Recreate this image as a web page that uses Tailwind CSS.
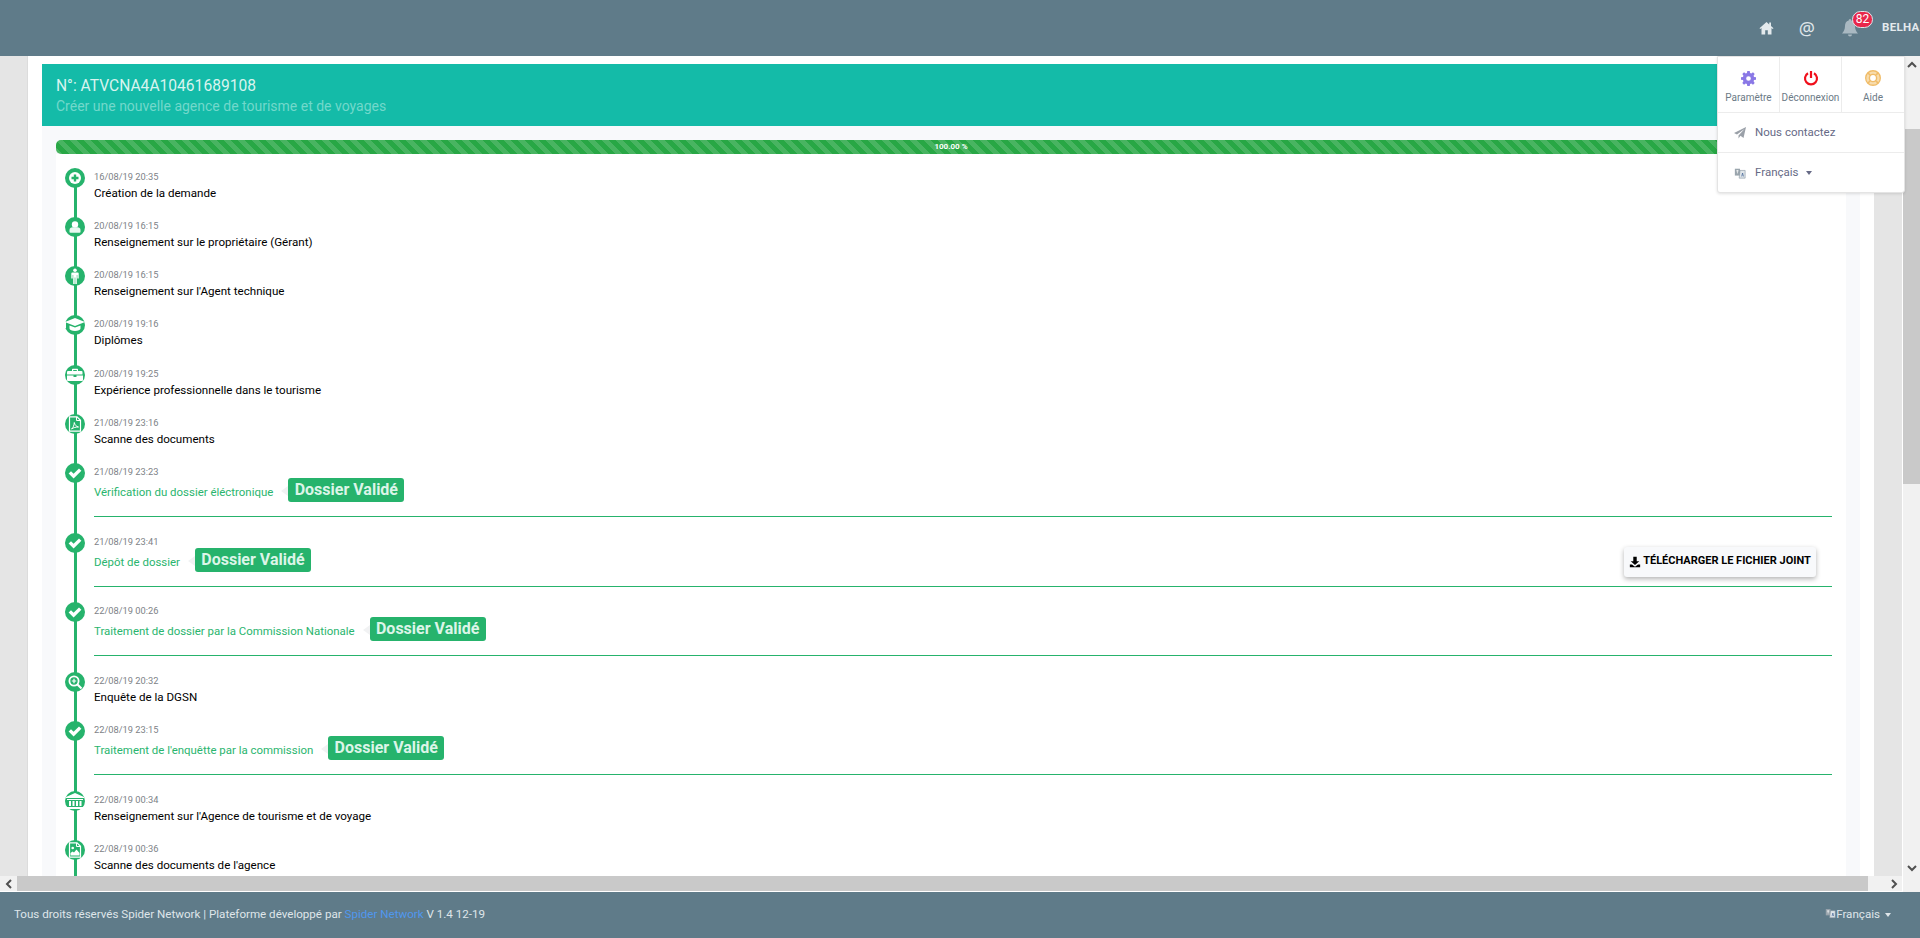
<!DOCTYPE html>
<html lang="fr">
<head>
<meta charset="utf-8">
<title>Suivi</title>
<script src="https://cdn.jsdelivr.net/npm/@tailwindcss/browser@4"></script>
</head>
<body class="m-0 overflow-hidden">
<svg class="hidden" width="0" height="0">
  <symbol id="check" viewBox="0 0 20 20"><path d="M3.600 10.600 6 8.200l2.600 2.600L14 5.400l2.400 2.400-7.800 7.800z" fill="currentColor"/></symbol>
  <symbol id="download" viewBox="0 0 14 14"><path d="M5 1h4v5h3L7 10.500 2 6h3zM1 10h2.500L7 12.500 10.500 10H13v3H1z" fill="currentColor"/></symbol>
  <symbol id="lang" viewBox="0 0 14 14"><path d="M1 2h6v8H1z" fill="#9aa5ad"/><path d="M7 4h6v9H6z" fill="#dfe5e9" stroke="#8794a0" stroke-width=".7"/><path d="M9 11l1-4 1 4" fill="none" stroke="#4a6a9a" stroke-width=".9"/><path d="M2.500 4.500h3M4 3.500v4" stroke="#fff" stroke-width=".8"/></symbol>
</svg>
<div class="flex flex-col h-[938px] w-[1920px] overflow-hidden font-['Roboto',sans-serif]">

  <header class="h-[56px] shrink-0 bg-[#5f7b89] flex items-center justify-end">
    <svg class="w-[15px] h-[14px] text-[#e4eaed] mr-[25px]" viewBox="0 0 15 14"><path d="M7.500 1 .5 7.300l.8.800L2.500 7v6.500h3.700V9.300h2.600v4.200h3.700V7l1.200 1.100.8-.8L12 5V1.500h-1.800v2z" fill="currentColor"/></svg>
    <span class="text-[18px] leading-none text-[#dfe6ea] mr-[27px] font-['Noto_Sans',sans-serif]">@</span>
    <div class="relative w-[16px] h-[18px] mr-[24px]">
      <svg class="w-[16px] h-[18px] text-[#a9b9c2]" viewBox="0 0 16 18"><path d="M8 0a1.400 1.400 0 0 1 1.300 1.500C12 2.200 13 4.500 13 7c0 3.500 1.200 5.500 3 7.500H0C1.800 12.500 3 10.500 3 7c0-2.500 1-4.800 3.700-5.500A1.400 1.400 0 0 1 8 0zM6 15.500h4a2 2 0 0 1-4 0z" fill="currentColor"/></svg>
      <span class="absolute left-[10px] -top-[8px] w-[21px] h-[17px] rounded-full bg-[#e8264b] border border-[#dfe6ea] text-white text-[12px] leading-[15px] text-center">82</span>
    </div>
    <span class="w-[38px] overflow-hidden whitespace-nowrap text-[11.500px] font-bold text-[#e4eaed] tracking-[.3px]">BELHA</span>
  </header>

  <div class="flex-1 flex min-h-0 relative">
    <div class="flex-1 min-w-0 flex flex-col">
      <main class="flex-1 min-h-0 flex overflow-hidden">
        <div class="w-[28px] shrink-0 bg-[#e5e5e5] border-r border-[#dcdcdc]"></div>
        <div class="flex-1 min-w-0 bg-white pt-[8px] pl-[14px] pr-[14px]">
          <section class="h-full flex flex-col">
            <div class="h-[62px] shrink-0 bg-[#14bba8] pl-[14px] pt-[2px] flex flex-col justify-center">
              <div class="text-[15.600px] leading-[20px] text-[#d9f4ef]">N°: ATVCNA4A10461689108</div>
              <div class="text-[14px] leading-[20px] text-[#72d8cb]">Créer une nouvelle agence de tourisme et de voyages</div>
            </div>
            <div class="flex-1 min-h-0 flex flex-col bg-[#f8f9fb] pt-[14px] px-[14px]">
              <div class="h-[14px] shrink-0 rounded-l-[5px] bg-[#28a745] bg-[linear-gradient(45deg,rgba(255,255,255,.15)_25%,transparent_25%,transparent_50%,rgba(255,255,255,.15)_50%,rgba(255,255,255,.15)_75%,transparent_75%,transparent)] bg-[length:14px_14px] flex items-center justify-center text-white text-[8px] font-bold leading-none">100.00 %</div>
              <div class="flex-1 min-h-0 bg-white relative pt-[14px] overflow-hidden">
                <div class="absolute left-[18px] top-[24px] bottom-0 w-[3px] bg-[#26b36c]"></div>

                <div class="relative h-[49.170px] flex pl-[9px] gap-[9px]">
                  <span class="w-[20px] h-[20px] shrink-0 rounded-full bg-[#26b36c] flex items-center justify-center"><svg class="w-[20px] h-[20px]" viewBox="0 0 20 20"><circle cx="10" cy="10" r="6" fill="#fff"/><path d="M8.800 6.500h2.400v2.300h2.300v2.400h-2.300v2.300H8.800v-2.300H6.500V8.800h2.300z" fill="#26b36c"/></svg></span>
                  <div><div class="pt-px text-[9.300px] leading-[15px] h-[16px] text-[#7d8287]">16/08/19 20:35</div><div class="text-[11.600px] leading-[18px] text-black">Création de la demande</div></div>
                </div>
                <div class="relative h-[49.170px] flex pl-[9px] gap-[9px]">
                  <span class="w-[20px] h-[20px] shrink-0 rounded-full bg-[#26b36c]"><svg class="w-[20px] h-[20px]" viewBox="0 0 20 20"><circle cx="10" cy="7.500" r="3.200" fill="#fff"/><path d="M4.500 15v-2c0-1.800 1.500-2.800 3-2.800h5c1.500 0 3 1 3 2.800v2q0 .8-1 .8H5.500q-1 0-1-.8z" fill="#e8f8f0"/></svg></span>
                  <div><div class="pt-px text-[9.300px] leading-[15px] h-[16px] text-[#7d8287]">20/08/19 16:15</div><div class="text-[11.600px] leading-[18px] text-black">Renseignement sur le propriétaire (Gérant)</div></div>
                </div>
                <div class="relative h-[49.170px] flex pl-[9px] gap-[9px]">
                  <span class="w-[20px] h-[20px] shrink-0 rounded-full bg-[#26b36c]"><svg class="w-[20px] h-[20px]" viewBox="0 0 20 20"><circle cx="10" cy="4.300" r="1.800" fill="#fff"/><path d="M6.300 7.500q0-1 1-1h5.400q1 0 1 1v5h-1.400v-3.500h-.5V18h-1.500v-6.500h-.6V18H8.200V9h-.5v3.500H6.300z" fill="#fff"/></svg></span>
                  <div><div class="pt-px text-[9.300px] leading-[15px] h-[16px] text-[#7d8287]">20/08/19 16:15</div><div class="text-[11.600px] leading-[18px] text-black">Renseignement sur l'Agent technique</div></div>
                </div>
                <div class="relative h-[49.170px] flex pl-[9px] gap-[9px]">
                  <span class="w-[20px] h-[20px] shrink-0 rounded-full bg-[#26b36c]"><svg class="w-[20px] h-[20px]" viewBox="0 0 20 20"><path d="M10 3 20 7l-10 4L1 7.500V13H0V7z" fill="#fff"/><path d="M4.500 10.500 10 12.500l5.500-2v3c0 1.500-2.500 2.500-5.500 2.500s-5.500-1-5.500-2.500z" fill="#fff"/></svg></span>
                  <div><div class="pt-px text-[9.300px] leading-[15px] h-[16px] text-[#7d8287]">20/08/19 19:16</div><div class="text-[11.600px] leading-[18px] text-black">Diplômes</div></div>
                </div>
                <div class="relative h-[49.170px] flex pl-[9px] gap-[9px]">
                  <span class="w-[20px] h-[20px] shrink-0 rounded-full bg-[#26b36c]"><svg class="w-[20px] h-[20px]" viewBox="0 0 20 20"><path d="M7 6V4.500q0-.7.7-.7h4.600q.7 0 .7.700V6h3.500q1 0 1 1v2.500H2V7q0-1 1-1zm1.200 0h3.600V5H8.200zM2 10.500h6.500V12h3v-1.500H18V15q0 1-1 1H3q-1 0-1-1z" fill="#fff"/></svg></span>
                  <div><div class="pt-px text-[9.300px] leading-[15px] h-[16px] text-[#7d8287]">20/08/19 19:25</div><div class="text-[11.600px] leading-[18px] text-black">Expérience professionnelle dans le tourisme</div></div>
                </div>
                <div class="relative h-[49.170px] flex pl-[9px] gap-[9px]">
                  <span class="w-[20px] h-[20px] shrink-0 rounded-full bg-[#26b36c]"><svg class="w-[20px] h-[20px]" viewBox="0 0 20 20"><path d="M4.500 2.800h7.500l3.500 3.500v10.900h-11z" fill="none" stroke="#fff" stroke-width="1.200"/><path d="M11.500 3v3.500H15" fill="none" stroke="#fff"/><path d="M6.500 15c2-1.500 2.500-4 2.800-6.500.5 2.500 2 4 4.200 4.500-2.500 0-5 .5-7 2z" fill="none" stroke="#fff" stroke-width="1"/></svg></span>
                  <div><div class="pt-px text-[9.300px] leading-[15px] h-[16px] text-[#7d8287]">21/08/19 23:16</div><div class="text-[11.600px] leading-[18px] text-black">Scanne des documents</div></div>
                </div>

                <div class="relative h-[69.670px] flex pl-[9px] gap-[9px]">
                  <span class="w-[20px] h-[20px] shrink-0 rounded-full bg-[#26b36c] text-white"><svg class="w-[20px] h-[20px]"><use href="#check"/></svg></span>
                  <div class="flex-1 mr-[14px]"><div class="pt-px text-[9.300px] leading-[15px] h-[16px] text-[#7d8287]">21/08/19 23:23</div>
                    <div class="flex items-center h-[24px] -mt-[1px]"><span class="text-[11.450px] leading-[18px] text-[#2ab56e] relative top-[2px]">Vérification du dossier éléctronique</span><span class="relative ml-[15px] w-[116px] h-[24px] rounded-[3px] bg-[#26b36c] text-[#dcf5e8] text-[16px] font-bold leading-[24px] text-center">Dossier Validé<i class="absolute -left-[7px] top-[8px] w-0 h-0 border-y-[5px] border-y-transparent border-r-[7px] border-r-[#f1f2f3]"></i></span></div>
                    <div class="h-px bg-[#26b36c] mt-[14px]"></div></div>
                </div>
                <div class="relative h-[69.670px] flex pl-[9px] gap-[9px]">
                  <span class="w-[20px] h-[20px] shrink-0 rounded-full bg-[#26b36c] text-white"><svg class="w-[20px] h-[20px]"><use href="#check"/></svg></span>
                  <div class="flex-1 mr-[14px]"><div class="pt-px text-[9.300px] leading-[15px] h-[16px] text-[#7d8287]">21/08/19 23:41</div>
                    <div class="flex items-center h-[24px] -mt-[1px]"><span class="text-[11.450px] leading-[18px] text-[#2ab56e] relative top-[2px]">Dépôt de dossier</span><span class="relative ml-[15px] w-[116px] h-[24px] rounded-[3px] bg-[#26b36c] text-[#dcf5e8] text-[16px] font-bold leading-[24px] text-center">Dossier Validé<i class="absolute -left-[7px] top-[8px] w-0 h-0 border-y-[5px] border-y-transparent border-r-[7px] border-r-[#f1f2f3]"></i></span>
                      <span class="relative top-[2px] ml-auto mr-[16px] -my-[3px] h-[30px] w-[192px] rounded-[3px] bg-[#f8f9fb] shadow-[0_2px_5px_rgba(0,0,0,.3)] flex items-center justify-center gap-[2px] text-[11px] font-bold text-black whitespace-nowrap"><svg class="w-[12px] h-[12px]"><use href="#download"/></svg>TÉLÉCHARGER LE FICHIER JOINT</span></div>
                    <div class="h-px bg-[#26b36c] mt-[14px]"></div></div>
                </div>
                <div class="relative h-[69.670px] flex pl-[9px] gap-[9px]">
                  <span class="w-[20px] h-[20px] shrink-0 rounded-full bg-[#26b36c] text-white"><svg class="w-[20px] h-[20px]"><use href="#check"/></svg></span>
                  <div class="flex-1 mr-[14px]"><div class="pt-px text-[9.300px] leading-[15px] h-[16px] text-[#7d8287]">22/08/19 00:26</div>
                    <div class="flex items-center h-[24px] -mt-[1px]"><span class="text-[11.450px] leading-[18px] text-[#2ab56e] relative top-[2px]">Traitement de dossier par la Commission Nationale</span><span class="relative ml-[15px] w-[116px] h-[24px] rounded-[3px] bg-[#26b36c] text-[#dcf5e8] text-[16px] font-bold leading-[24px] text-center">Dossier Validé<i class="absolute -left-[7px] top-[8px] w-0 h-0 border-y-[5px] border-y-transparent border-r-[7px] border-r-[#f1f2f3]"></i></span></div>
                    <div class="h-px bg-[#26b36c] mt-[14px]"></div></div>
                </div>

                <div class="relative h-[49.170px] flex pl-[9px] gap-[9px]">
                  <span class="w-[20px] h-[20px] shrink-0 rounded-full bg-[#26b36c]"><svg class="w-[20px] h-[20px]" viewBox="0 0 20 20"><circle cx="9" cy="9" r="4.600" fill="none" stroke="#fff" stroke-width="1.800"/><path d="m12.500 12.500 4 4" stroke="#fff" stroke-width="2.200"/><path d="M8.400 6.800h1.200v1.600h1.600v1.200H9.600v1.600H8.400V9.600H6.800V8.400h1.600z" fill="#fff"/></svg></span>
                  <div><div class="pt-px text-[9.300px] leading-[15px] h-[16px] text-[#7d8287]">22/08/19 20:32</div><div class="text-[11.600px] leading-[18px] text-black">Enquête de la DGSN</div></div>
                </div>

                <div class="relative h-[69.670px] flex pl-[9px] gap-[9px]">
                  <span class="w-[20px] h-[20px] shrink-0 rounded-full bg-[#26b36c] text-white"><svg class="w-[20px] h-[20px]"><use href="#check"/></svg></span>
                  <div class="flex-1 mr-[14px]"><div class="pt-px text-[9.300px] leading-[15px] h-[16px] text-[#7d8287]">22/08/19 23:15</div>
                    <div class="flex items-center h-[24px] -mt-[1px]"><span class="text-[11.450px] leading-[18px] text-[#2ab56e] relative top-[2px]">Traitement de l'enquêtte par la commission</span><span class="relative ml-[15px] w-[116px] h-[24px] rounded-[3px] bg-[#26b36c] text-[#dcf5e8] text-[16px] font-bold leading-[24px] text-center">Dossier Validé<i class="absolute -left-[7px] top-[8px] w-0 h-0 border-y-[5px] border-y-transparent border-r-[7px] border-r-[#f1f2f3]"></i></span></div>
                    <div class="h-px bg-[#26b36c] mt-[14px]"></div></div>
                </div>

                <div class="relative h-[49.170px] flex pl-[9px] gap-[9px]">
                  <span class="w-[20px] h-[20px] shrink-0 rounded-full bg-[#26b36c]"><svg class="w-[20px] h-[20px]" viewBox="0 0 20 20"><path d="M10 2 19 6v1H1V6zM2 8h16v1H2zM4 10h2v5H4zM7.500 10h2v5h-2zM11 10h2v5h-2zM14.500 10h2v5h-2zM2 16h16v2H2z" fill="#fff"/></svg></span>
                  <div><div class="pt-px text-[9.300px] leading-[15px] h-[16px] text-[#7d8287]">22/08/19 00:34</div><div class="text-[11.600px] leading-[18px] text-black">Renseignement sur l'Agence de tourisme et de voyage</div></div>
                </div>
                <div class="relative h-[49.170px] flex pl-[9px] gap-[9px]">
                  <span class="w-[20px] h-[20px] shrink-0 rounded-full bg-[#26b36c]"><svg class="w-[20px] h-[20px]" viewBox="0 0 20 20"><path d="M4.500 2.800h7.500l3.500 3.500v10.900h-11z" fill="none" stroke="#fff" stroke-width="1.200"/><path d="M11.500 3v3.500H15" fill="none" stroke="#fff"/><circle cx="7.700" cy="8" r="1.300" fill="#fff"/><path d="M5.500 15.500v-2.500l2-1.500 1.500 1 2.500-3 3 3.500v2.500z" fill="#fff"/></svg></span>
                  <div><div class="pt-px text-[9.300px] leading-[15px] h-[16px] text-[#7d8287]">22/08/19 00:36</div><div class="text-[11.600px] leading-[18px] text-black">Scanne des documents de l'agence</div></div>
                </div>
              </div>
            </div>
          </section>
        </div>
        <div class="w-[28px] shrink-0 bg-[#e5e5e5]"></div>
      </main>
      <div class="h-[15px] shrink-0 flex bg-[#f1f1f1] items-center mb-px">
        <span class="w-[17px] flex justify-center text-[#505050]"><svg class="w-[8px] h-[10px]" viewBox="0 0 8 10"><path d="M6 1 2 5l4 4" fill="none" stroke="currentColor" stroke-width="2"/></svg></span>
        <span class="w-[1851px] h-full bg-[#c9c9c9]"></span>
        <span class="flex-1 flex justify-end pr-[4px] text-[#505050]"><svg class="w-[8px] h-[10px]" viewBox="0 0 8 10"><path d="m2 1 4 4-4 4" fill="none" stroke="currentColor" stroke-width="2"/></svg></span>
      </div>
    </div>
    <div class="w-[17px] shrink-0 ml-px bg-[#f1f1f1] flex flex-col items-center">
      <svg class="w-[10px] h-[8px] mt-[5px] text-[#505050] shrink-0" viewBox="0 0 10 8"><path d="m1 6 4-4 4 4" fill="none" stroke="currentColor" stroke-width="2"/></svg>
      <div class="w-full h-[355px] mt-[60px] bg-[#c9c9c9]"></div>
      <svg class="w-[10px] h-[8px] mt-auto mb-[20px] text-[#505050] shrink-0" viewBox="0 0 10 8"><path d="m1 2 4 4 4-4" fill="none" stroke="currentColor" stroke-width="2"/></svg>
    </div>

    <div class="absolute left-[1717px] top-0 w-[188px] h-[137px] flex flex-col bg-white border border-[#e4e4e4] rounded-b-[3px] shadow-[0_1px_3px_rgba(0,0,0,.12)]">
      <div class="h-[56px] shrink-0 flex border-b border-[#ececec]">
        <div class="w-[62px] border-r border-[#ececec] flex flex-col items-center pt-[14px]">
          <svg class="w-[15px] h-[15px] text-[#8a78e6]" viewBox="0 0 16 16"><path d="M6.700 0h2.600l.4 2.100 1.300.5 1.800-1.200 1.800 1.800-1.200 1.800.5 1.300 2.100.4v2.600l-2.100.4-.5 1.300 1.200 1.800-1.800 1.800-1.800-1.200-1.300.5-.4 2.100H6.700l-.4-2.100-1.300-.5-1.800 1.200-1.800-1.800 1.200-1.800-.5-1.300L0 9.300V6.700l2.100-.4.5-1.300-1.200-1.800 1.800-1.800L5 2.600l1.300-.5zM8 5.500a2.500 2.500 0 1 0 0 5 2.500 2.500 0 0 0 0-5z" fill="currentColor" fill-rule="evenodd"/></svg>
          <span class="text-[10px] leading-[14px] mt-[5px] text-[#6c7a86]">Paramètre</span>
        </div>
        <div class="w-[62px] border-r border-[#ececec] flex flex-col items-center pt-[13px]">
          <svg class="w-[16px] h-[16px] text-[#f0101c]" viewBox="0 0 16 16"><path d="M8 1v7" stroke="currentColor" stroke-width="2.200" fill="none"/><path d="M5 3.200a6 6 0 1 0 6 0" stroke="currentColor" stroke-width="2.200" fill="none"/></svg>
          <span class="text-[10px] leading-[14px] mt-[5px] text-[#6c7a86] whitespace-nowrap">Déconnexion</span>
        </div>
        <div class="flex-1 flex flex-col items-center pt-[13px]">
          <svg class="w-[16px] h-[16px]" viewBox="0 0 16 16"><circle cx="8" cy="8" r="5.500" fill="none" stroke="#f7dcae" stroke-width="3"/><circle cx="8" cy="8" r="7.300" fill="none" stroke="#f0bc68" stroke-width="1.400"/><circle cx="8" cy="8" r="3.600" fill="none" stroke="#f0bc68" stroke-width="1.400"/><path d="m2.800 2.800 2.700 2.700m4.900 0 2.800-2.700m-2.800 7.700 2.800 2.700m-7.700-2.700-2.700 2.700" stroke="#f0bc68" stroke-width="1.600"/></svg>
          <span class="text-[10px] leading-[14px] mt-[5px] text-[#6c7a86]">Aide</span>
        </div>
      </div>
      <div class="h-[40px] shrink-0 flex items-center pl-[16px] border-b border-[#ececec]">
        <svg class="w-[12px] h-[12px] text-[#9aa0a8] mr-[9px]" viewBox="0 0 12 12"><path d="M12 0 9.500 11 6.500 8.800 4.500 11.500V8.500L10.500 2 3 7.500 0 6z" fill="currentColor"/></svg>
        <span class="text-[11.500px] text-[#666a86]">Nous contactez</span>
      </div>
      <div class="flex-1 flex items-center pl-[16px]">
        <svg class="w-[12px] h-[12px] mr-[9px]"><use href="#lang"/></svg>
        <span class="text-[11.500px] text-[#666a86]">Français</span>
        <i class="ml-[7px] w-0 h-0 border-x-[3px] border-x-transparent border-t-[4px] border-t-[#666a86]"></i>
      </div>
    </div>
  </div>

  <footer class="h-[46px] shrink-0 bg-[#5f7b89] flex items-center pl-[14px] pr-[29px] text-[11.600px] text-[#dfe6ea]">
    <span>Tous droits réservés Spider Network | Plateforme développé par <span class="text-[#4f97ee]">Spider Network</span> V 1.4 12-19</span>
    <span class="ml-auto flex items-center"><svg class="w-[11px] h-[12px] -mt-[4px]"><use href="#lang"/></svg><span>Français</span><i class="ml-[5px] w-0 h-0 border-x-[3px] border-x-transparent border-t-[4px] border-t-[#dfe6ea]"></i></span>
  </footer>
</div>
</body>
</html>
